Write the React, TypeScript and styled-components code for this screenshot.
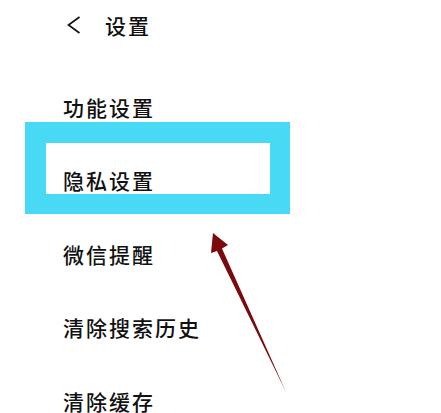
import React from "react";
import styled, {createGlobalStyle} from "styled-components";

const GlobalStyle = createGlobalStyle`
  html, body {
    margin: 0;
    padding: 0;
    background: #fff;
  }
  body {
    font-family: "Noto Sans CJK SC", "Noto Sans", sans-serif;
    color: #111;
  }
`;

const Page = styled.div`
  position: relative;
  width: 441px;
  height: 413px;
  overflow: hidden;
  background: #fff;
`;

const Header = styled.header`
  display: flex;
  align-items: center;
  height: 22px;
  padding: 14px 0 0 64px;
`;

const BackButton = styled.button`
  display: flex;
  align-items: center;
  justify-content: center;
  width: 20px;
  height: 22px;
  padding: 0;
  margin-right: 21px;
  border: none;
  background: none;
  color: #111;
`;

const Title = styled.h1`
  margin: 0;
  font-size: 21px;
  line-height: 22px;
  font-weight: 500;
  letter-spacing: 2px;
`;

const List = styled.ul`
  list-style: none;
  margin: 34px 0 0;
  padding: 0;
`;

const Row = styled.li<{ $highlighted?: boolean }>`
  position: relative;
  display: flex;
  align-items: center;
  height: 73.5px;
  padding-left: 63px;
  font-size: 21px;
  line-height: 22px;
  font-weight: 500;
  letter-spacing: 2px;

  ${({$highlighted}) => $highlighted && `
    &::before {
      content: "";
      position: absolute;
      left: 25px;
      top: -21.5px;
      width: 224px;
      height: 51px;
      border: solid #48d9f5;
      border-width: 21px 20px 20px 21px;
      pointer-events: none;
    }
  `}
`;

const Arrow = styled.svg`
  position: absolute;
  left: 0;
  top: 0;
  pointer-events: none;
`;

const items = ["功能设置", "隐私设置", "微信提醒", "清除搜索历史", "清除缓存"];

const App = (): JSX.Element => {
  return (
    <Page>
      <GlobalStyle />
      <Header>
        <BackButton aria-label="返回">
          <svg width="14" height="18" viewBox="0 0 14 18">
            <polyline points="12.5,1 1.5,9 12.5,17" fill="none" stroke="#111" strokeWidth="1.7" />
          </svg>
        </BackButton>
        <Title>设置</Title>
      </Header>

      <List>
        {items.map((item, i) => (
          <Row key={item} $highlighted={i === 1}>{item}</Row>
        ))}
      </List>

      <Arrow width="441" height="413" viewBox="0 0 441 413">
        <polygon
          points="213,233 228,245 222,248.5 286,392 217,251 211,253"
          fill="#7a0a0c"
        />
      </Arrow>
    </Page>
  );
};

export default App;
